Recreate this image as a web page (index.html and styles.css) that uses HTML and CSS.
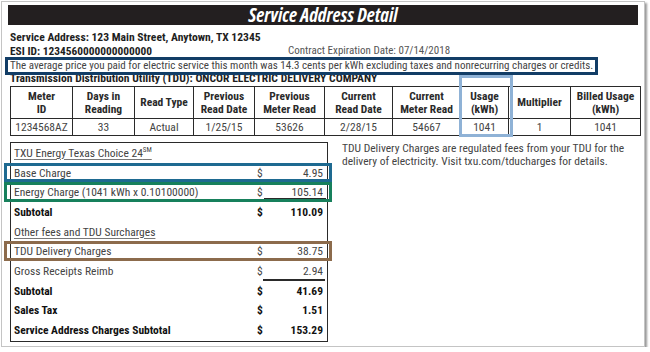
FILE: index.html
```html
<!DOCTYPE html>
<html>
<head>
<meta charset="utf-8">
<link rel="stylesheet" href="styles.css">
</head>
<body>
<div class="card">
  <div class="title-bar">Service Address Detail</div>
  <div class="addr">Service Address: 123 Main Street, Anytown, TX 12345</div>
  <div class="esi-line">
    <span class="esi">ESI ID: 1234560000000000000</span>
    <span class="contract">Contract Expiration Date: 07/14/2018</span>
  </div>
  <div class="avg-box">The average price you paid for electric service this month was 14.3 cents per kWh excluding taxes and nonrecurring charges or credits.</div>
  <div class="tdu">Transmission Distribution Utility (TDU): ONCOR ELECTRIC DELIVERY COMPANY</div>
  <table class="meter">
    <colgroup>
      <col class="c62"><col class="c62"><col class="c59"><col class="c61"><col class="c70"><col class="c68"><col class="c68"><col class="c48"><col class="c62"><col class="c70">
    </colgroup>
    <tr class="head">
      <th>Meter<br>ID</th><th>Days in<br>Reading</th><th>Read Type</th><th>Previous<br>Read Date</th><th>Previous<br>Meter Read</th><th>Current<br>Read Date</th><th>Current<br>Meter Read</th><th>Usage<br>(kWh)</th><th>Multiplier</th><th>Billed Usage<br>(kWh)</th>
    </tr>
    <tr class="data">
      <td>1234568AZ</td><td>33</td><td>Actual</td><td>1/25/15</td><td>53626</td><td>2/28/15</td><td>54667</td><td>1041</td><td>1</td><td>1041</td>
    </tr>
  </table>
  <div class="usage-hl"></div>
  <div class="lower">
    <div class="charges">
      <div class="row"><span class="sec">TXU Energy Texas Choice 24<sup>SM</sup></span></div>
      <div class="row hl hl-blue"><span>Base Charge</span><span class="cur">$</span><span class="amt">4.95</span></div>
      <div class="row hl hl-green"><span>Energy Charge (1041 kWh x 0.10100000)</span><span class="cur">$</span><span class="amt">105.14</span><span class="rule"></span></div>
      <div class="row bold"><span>Subtotal</span><span class="cur">$</span><span class="amt">110.09</span></div>
      <div class="row"><span class="sec">Other fees and TDU Surcharges</span></div>
      <div class="row hl hl-brown"><span>TDU Delivery Charges</span><span class="cur">$</span><span class="amt">38.75</span></div>
      <div class="row"><span>Gross Receipts Reimb</span><span class="cur">$</span><span class="amt">2.94</span><span class="rule"></span></div>
      <div class="row bold"><span>Subtotal</span><span class="cur">$</span><span class="amt">41.69</span></div>
      <div class="row bold"><span>Sales Tax</span><span class="cur">$</span><span class="amt">1.51</span></div>
      <div class="row bold"><span>Service Address Charges Subtotal</span><span class="cur">$</span><span class="amt">153.29</span></div>
    </div>
    <p class="note">TDU Delivery Charges are regulated fees from your TDU for the delivery of electricity. Visit txu.com/tducharges for details.</p>
  </div>
</div>
</body>
</html>
```

FILE: styles.css
```css
html, body {
  margin: 0;
  padding: 0;
  background: #ffffff;
}
body {
  font-family: "Roboto Condensed", "Open Sans", "Liberation Sans", sans-serif;
  color: #444;
}
.card {
  position: relative;
  box-sizing: border-box;
  margin: 1px 0 0 1px;
  width: 644px;
  height: 346px;
  border: 1px solid #c4c4c4;
  box-shadow: 2px 2px 2px #9a9a9a;
  background: #fff;
  padding: 3px 5px 0 6px;
}
.title-bar {
  height: 20px;
  width: 630px;
  background: #231f20;
  color: #fff;
  font-family: "Open Sans", sans-serif;
  font-stretch: 75%;
  font-weight: 700;
  font-style: italic;
  font-size: 19px;
  line-height: 20px;
  text-align: center;
}
.addr {
  margin: 5px 0 0 2px;
  font-weight: 700;
  font-size: 11.6px;
  line-height: 15px;
  color: #1e1e1e;
}
.esi-line {
  display: flex;
  margin: -1px 0 0 2px;
  height: 14px;
  line-height: 14px;
  font-size: 11px;
}
.esi {
  font-weight: 700;
  font-size: 11.4px;
  color: #1e1e1e;
  width: 278px;
}
.contract {
  color: #555;
}
.avg-box {
  position: relative;
  z-index: 1;
  margin: -1px 0 0 -3px;
  width: 593px;
  box-sizing: border-box;
  height: 18px;
  border: 3px solid #123d66;
  background: #fff;
  font-size: 11px;
  line-height: 12px;
  padding: 0 0 0 2px;
  color: #444;
  white-space: nowrap;
}
.tdu {
  margin: -4px 0 0 2px;
  height: 15px;
  line-height: 15px;
  font-size: 11.6px;
  font-weight: 700;
  color: #1e1e1e;
  white-space: nowrap;
}
.meter {
  margin-left: 2px;
  border-collapse: collapse;
  table-layout: fixed;
  width: 630px;
  font-size: 11.5px;
}
.c62 { width: 62px; }
.c59 { width: 59px; }
.c61 { width: 61px; }
.c70 { width: 70px; }
.c68 { width: 68px; }
.c48 { width: 48px; }
.meter th, .meter td {
  border: 1.5px solid #2a2a2a;
  text-align: center;
  padding: 0;
}
.meter th {
  height: 31px;
  line-height: 13px;
  font-weight: 700;
  color: #2a2a2a;
}
.meter td {
  height: 16px;
  line-height: 14px;
  color: #444;
}
.usage-hl {
  position: absolute;
  left: 457px;
  top: 73px;
  width: 54px;
  height: 62px;
  box-sizing: border-box;
  border: 3px solid #8fb2d6;
}
.lower {
  display: flex;
  margin-top: 6px;
  margin-left: 2px;
}
.charges {
  box-sizing: border-box;
  width: 318px;
  height: 200px;
  border: 1.5px solid #2a2a2a;
}
.row {
  position: relative;
  box-sizing: border-box;
  height: 19.7px;
  display: grid;
  grid-template-columns: 1fr 18px 48px;
  align-items: center;
  padding: 0 4px 0 3px;
  font-size: 11.5px;
  color: #444;
}
.row .amt {
  text-align: right;
}
.row .rule {
  position: absolute;
  right: 2px;
  bottom: 0;
  width: 62px;
  height: 1.5px;
  background: #2a2a2a;
}
.row.hl .rule {
  right: 3px;
  bottom: 0;
}
.row .sec {
  text-decoration: underline;
  text-decoration-color: #777;
  text-underline-offset: 2px;
}
.row sup {
  font-size: 7px;
  line-height: 0;
  vertical-align: 5px;
}
.row.hl {
  margin: 0 -5px 0 -7px;
  border: 3px solid #1e6a91;
  padding: 0 6px 0 7px;
}
.row.hl-blue { border-color: #1e6a91; }
.row.hl-green { border-color: #17805c; }
.row.hl-brown { border-color: #8c6b4c; }
.row.bold {
  font-weight: 700;
  color: #111;
}
.note {
  margin: 0 0 0 14px;
  width: 290px;
  font-size: 11.5px;
  line-height: 13px;
  color: #444;
}
```
